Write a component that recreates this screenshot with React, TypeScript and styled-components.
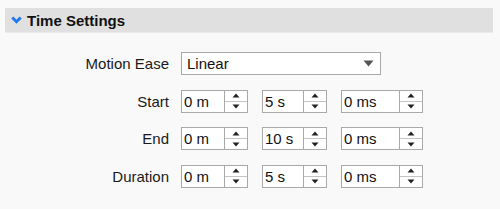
import React from "react";
import styled, { createGlobalStyle } from "styled-components";

const GlobalStyle = createGlobalStyle`
  html, body {
    margin: 0;
    padding: 0;
    background: #f9f9f9;
    font-family: "Liberation Sans", Arial, sans-serif;
  }
`;

const Panel = styled("div")`
  width: 500px;
  height: 209px;
  padding-top: 8px;
  box-sizing: border-box;
`;

const Header = styled("div")`
  display: flex;
  align-items: center;
  gap: 5px;
  margin: 0 7px 0 5px;
  height: 25px;
  padding-left: 6px;
  background: #e0e0e0;
  border-bottom: 1px solid #ececec;
  box-sizing: border-box;
`;

const HeaderTitle = styled("span")`
  font-weight: bold;
  font-size: 15px;
  color: #111;
`;

const Form = styled("div")`
  display: grid;
  grid-template-columns: 169px auto;
  column-gap: 12px;
  row-gap: 14.5px;
  margin-top: 19px;
  justify-content: start;
`;

const Label = styled("div")`
  text-align: right;
  align-self: center;
  font-size: 15px;
  color: #1a1a1a;
`;

const Controls = styled("div")`
  display: flex;
  gap: 14px;
`;

const Select = styled("div")`
  width: 200px;
  height: 23px;
  box-sizing: border-box;
  border: 1px solid #a9a9a9;
  background: #fff;
  display: flex;
  align-items: center;
  justify-content: space-between;
  padding: 0 6px 0 5px;
  font-size: 15px;
  color: #111;
`;

const Spinner = styled("div")<{ $width: number }>`
  width: ${(p) => p.$width}px;
  height: 23px;
  box-sizing: border-box;
  border: 1px solid #a9a9a9;
  background: #fff;
  display: flex;
`;

const Field = styled("div")`
  flex: 1;
  display: flex;
  align-items: center;
  padding-left: 2px;
  font-size: 15px;
  color: #111;
`;

const Stepper = styled("div")`
  width: 22px;
  border-left: 1px solid #a9a9a9;
  display: flex;
  flex-direction: column;
`;

const StepHalf = styled("div")<{ $top?: boolean }>`
  flex: 1;
  display: flex;
  align-items: center;
  justify-content: center;
  ${(p) => (p.$top ? "border-bottom: 1px solid #c4c4c4;" : "")}
`;

const Arrow = ({ up }: { up?: boolean }) => (
  <svg width="8" height="5" viewBox="0 0 8 5">
    {up ? (
      <path d="M0.5 4.5 L4 0.5 L7.5 4.5 Z" fill="#222" />
    ) : (
      <path d="M0.5 0.5 L4 4.5 L7.5 0.5 Z" fill="#222" />
    )}
  </svg>
);

const NumberBox = ({ value, width }: { value: string; width: number }) => (
  <Spinner $width={width}>
    <Field>{value}</Field>
    <Stepper>
      <StepHalf $top>
        <Arrow up />
      </StepHalf>
      <StepHalf>
        <Arrow />
      </StepHalf>
    </Stepper>
  </Spinner>
);

const rows = [
  { label: "Start", values: ["0 m", "5 s", "0 ms"] },
  { label: "End", values: ["0 m", "10 s", "0 ms"] },
  { label: "Duration", values: ["0 m", "5 s", "0 ms"] },
];

const widths = [67, 65, 82];

const App = () => (
  <Panel>
    <GlobalStyle />
    <Header>
      <svg width="11" height="8" viewBox="0 0 11 8">
        <path
          d="M1.3 1.5 L5.5 5.7 L9.7 1.5"
          stroke="#1f7aeb"
          strokeWidth="3"
          fill="none"
        />
      </svg>
      <HeaderTitle>Time Settings</HeaderTitle>
    </Header>
    <Form>
      <Label>Motion Ease</Label>
      <Select>
        <span>Linear</span>
        <svg width="11" height="7" viewBox="0 0 11 7">
          <path d="M0.5 0.5 L10.5 0.5 L5.5 6.5 Z" fill="#555" />
        </svg>
      </Select>
      {rows.map((row) => (
        <React.Fragment key={row.label}>
          <Label>{row.label}</Label>
          <Controls>
            {row.values.map((v, i) => (
              <NumberBox key={i} value={v} width={widths[i]} />
            ))}
          </Controls>
        </React.Fragment>
      ))}
    </Form>
  </Panel>
);

export default App;
